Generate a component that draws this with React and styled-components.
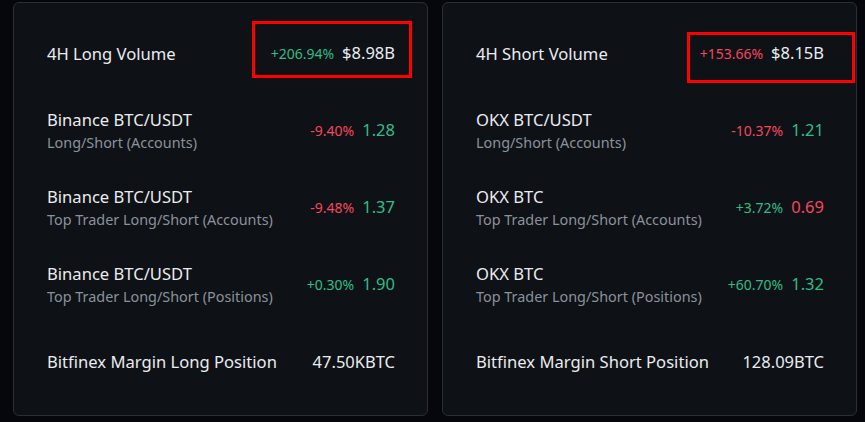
import React from "react";
import styled, { createGlobalStyle } from "styled-components";

const GlobalStyle = createGlobalStyle`
  body {
    margin: 0;
    background: #06070c;
    font-family: "Noto Sans", "Inter", sans-serif;
  }
`;

const longRows = [
  { title: "4H Long Volume", pct: "+206.94%", up: true, value: "$8.98B", plain: true, mark: { top: -21, bottom: -13, width: 160, right: -17 } },
  { title: "Binance BTC/USDT", sub: "Long/Short (Accounts)", pct: "-9.40%", up: false, value: "1.28", valueUp: true },
  { title: "Binance BTC/USDT", sub: "Top Trader Long/Short (Accounts)", pct: "-9.48%", up: false, value: "1.37", valueUp: true },
  { title: "Binance BTC/USDT", sub: "Top Trader Long/Short (Positions)", pct: "+0.30%", up: true, value: "1.90", valueUp: true },
  { title: "Bitfinex Margin Long Position", value: "47.50KBTC", plain: true },
];

const shortRows = [
  { title: "4H Short Volume", pct: "+153.66%", up: false, value: "$8.15B", plain: true, mark: { top: -10, bottom: -18, width: 168, right: -31 } },
  { title: "OKX BTC/USDT", sub: "Long/Short (Accounts)", pct: "-10.37%", up: false, value: "1.21", valueUp: true },
  { title: "OKX BTC", sub: "Top Trader Long/Short (Accounts)", pct: "+3.72%", up: true, value: "0.69", valueUp: false },
  { title: "OKX BTC", sub: "Top Trader Long/Short (Positions)", pct: "+60.70%", up: true, value: "1.32", valueUp: true },
  { title: "Bitfinex Margin Short Position", value: "128.09BTC", plain: true },
];

function Card({ rows }) {
  return (
    <Panel>
      {rows.map((r, i) => (
        <Row key={i}>
          <Label>
            <Title>{r.title}</Title>
            {r.sub && <Sub>{r.sub}</Sub>}
          </Label>
          <ValueGroup>
            {r.pct && <Pct $up={r.up}>{r.pct}</Pct>}
            <Value $tone={r.plain ? "plain" : r.valueUp ? "up" : "down"}>{r.value}</Value>
            {r.mark && (
              <Mark
                $top={r.mark.top}
                $bottom={r.mark.bottom}
                $width={r.mark.width}
                $right={r.mark.right}
              />
            )}
          </ValueGroup>
        </Row>
      ))}
    </Panel>
  );
}

export default function App() {
  return (
    <>
      <GlobalStyle />
      <Page>
        <Card rows={longRows} />
        <Card rows={shortRows} />
      </Page>
    </>
  );
}

const Page = styled.div`
  display: flex;
  gap: 14px;
  padding: 2px 8px 0 13px;
  width: 865px;
  height: 422px;
  box-sizing: border-box;
`;

const Panel = styled.div`
  width: 415px;
  height: 414px;
  box-sizing: border-box;
  background: #0e1116;
  border: 1px solid #2a2e36;
  border-radius: 6px;
  padding: 12px 32px 14px 33px;
  display: flex;
  flex-direction: column;
`;

const Row = styled.div`
  height: 77px;
  display: flex;
  align-items: center;
  justify-content: space-between;
`;

const Label = styled.div`
  display: flex;
  flex-direction: column;
  gap: 2px;
`;

const Title = styled.div`
  color: #eaecef;
  font-size: 16.6px;
  line-height: 22px;
`;

const Sub = styled.div`
  color: #8b929c;
  font-size: 14.4px;
  line-height: 20px;
`;

const ValueGroup = styled.div`
  position: relative;
  display: flex;
  align-items: baseline;
  gap: 8px;
  line-height: 22px;
`;

const Pct = styled.span`
  font-size: 14px;
  color: ${(p) => (p.$up ? "#2ebd85" : "#f6465d")};
`;

const toneColor = { plain: "#eaecef", up: "#2ebd85", down: "#f6465d" };

const Value = styled.span`
  font-size: 16.5px;
  color: ${(p) => toneColor[p.$tone]};
`;

const Mark = styled.div`
  position: absolute;
  top: ${(p) => p.$top}px;
  bottom: ${(p) => p.$bottom}px;
  right: ${(p) => p.$right}px;
  width: ${(p) => p.$width}px;
  box-sizing: border-box;
  border: 3px solid #f00;
  pointer-events: none;
`;
